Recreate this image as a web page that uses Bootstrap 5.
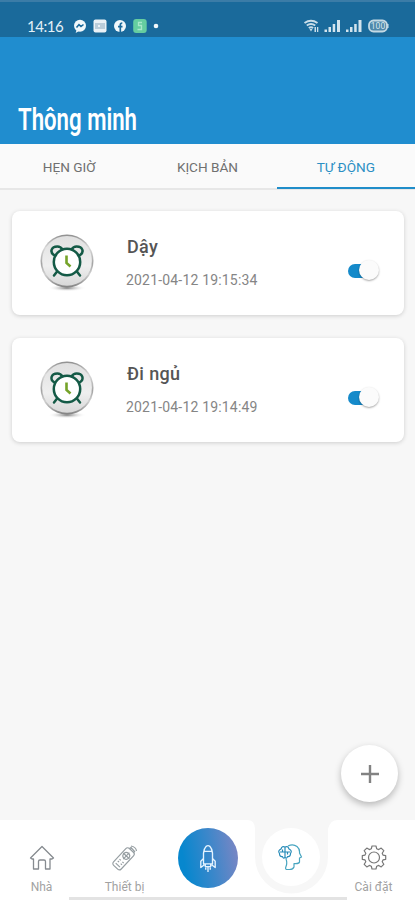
<!DOCTYPE html>
<html lang="vi">
<head>
<meta charset="utf-8">
<meta name="viewport" content="width=device-width, initial-scale=1">
<title>Thông minh</title>
<link rel="stylesheet" href="https://cdn.jsdelivr.net/npm/bootstrap@5.3.0/dist/css/bootstrap.min.css">
<style>
body{background:#f7f7f7;font-family:Roboto,"Noto Sans",sans-serif;color:#666}
svg{display:block;flex:none}
.screen{height:900px;width:415px}
.statusbar{height:37px;background:#1a6a9b;border-top:2px solid #3b7ca7;padding:12px 26px 0 27px;color:#e4f1f8}
.clock{font:15px/24px Lato,sans-serif;width:37px;letter-spacing:-.45px}
.appbar{height:107px;background:#208dcf;padding:58px 0 0 18px}
.tabs{height:46px;background:#fafafa;border-bottom:2px solid #e7e7e7}
.tabs .nav-link{padding:0;line-height:46px;height:45px;font-size:13.6px;color:#707070;border-bottom:0}
.tabs .nav-link.active{color:#2b8fc4;border-bottom:2px solid #208dc9}
.rule-card{height:104px;border:0;border-radius:8px;box-shadow:0 1px 4px rgba(0,0,0,.17);padding:0 25px 0 28px}
.rule-name{font-size:18px;line-height:22px;font-weight:500;color:#555;margin:-2px 0 13px 1px;letter-spacing:.35px}
.rule-time{font-size:14px;line-height:18px;color:#858585;letter-spacing:.18px}
.toggle{width:31px;height:22px}
.toggle-track{width:26px;height:14px;border-radius:7px;background:#158aca}
.toggle-thumb{right:0;top:0;width:20px;height:20px;border-radius:50%;background:#fbfbfb;box-shadow:0 1px 2px rgba(0,0,0,.35)}
.fab{width:57px;height:57px;margin-right:17px;margin-bottom:18px;background:#fff;box-shadow:0 3px 7px rgba(0,0,0,.26)}
.bottombar{height:80px}
.bottombar .tabitem{width:83px;height:80px;font-size:12px;line-height:15px;color:#a2a2a2;padding-top:24px}
.tabitem svg{margin-bottom:9px}
.tabitem .rocket svg,.tabitem .brain svg{margin:0}
.rocket{width:60px;height:60px;background:linear-gradient(80deg,#0787ce 15%,#3c87ca 55%,#8286c3)}
.brain{width:58px;height:58px;background:#fff}
.homebar{left:69px;bottom:0;width:278px;height:3px;background:#e3e3e3}
</style>
<script src="https://cdn.jsdelivr.net/npm/bootstrap@5.3.0/dist/js/bootstrap.bundle.min.js"></script>
</head>
<body>
<svg width="0" height="0" class="position-absolute">
 <defs>
  <linearGradient id="rim" x1="0" y1="0" x2="0" y2="1"><stop offset="0" stop-color="#8d8d8d"/><stop offset=".25" stop-color="#dadada"/><stop offset=".55" stop-color="#a4a4a4"/><stop offset=".75" stop-color="#d0d0d0"/><stop offset="1" stop-color="#808080"/></linearGradient>
  <linearGradient id="face" x1="0" y1="0" x2="0" y2="1"><stop offset="0" stop-color="#e0e0e0"/><stop offset=".6" stop-color="#efefef"/><stop offset="1" stop-color="#d8d8d8"/></linearGradient>
  <radialGradient id="shade"><stop offset="0" stop-color="#777"/><stop offset="1" stop-color="#fff" stop-opacity="0"/></radialGradient>
  <symbol id="alarm" viewBox="0 0 54 58">
   <ellipse cx="27" cy="54" rx="19" ry="3.5" fill="url(#shade)"/>
   <circle cx="27" cy="27" r="26.5" fill="url(#rim)"/>
   <circle cx="27" cy="26.8" r="24.900" fill="url(#face)"/>
   <g fill="none" stroke="#145a46" stroke-width="2.500" stroke-linecap="round">
    <path d="M14.500 21.500C9 18 11.500 12.500 17.500 12.600C20 12.600 21.500 14 22.500 15.600M39.500 21.500C45 18 42.500 12.500 36.500 12.600C34 12.600 32.500 14 31.500 15.600M22.500 15.600H31.500M17.500 37L14 41.500M36.500 37L40 41.500"/>
    <circle cx="27" cy="28" r="13.200" fill="#fff"/>
   </g>
   <path d="M26.500 21.500V29L30.500 32.500" fill="none" stroke="#75a329" stroke-width="2.600"/>
  </symbol>
 </defs>
</svg>
<div class="screen position-relative d-flex flex-column overflow-hidden">
 <header>
  <div class="statusbar d-flex align-items-start justify-content-between">
   <div class="d-flex align-items-center">
    <span class="clock">14:16</span>
    <svg width="97" height="24" viewBox="64 14 97 24">
     <circle cx="80" cy="25.700" r="6" fill="#f1f8fb"/><path d="M76.500 30L75.700 33L79 31Z" fill="#f1f8fb"/><path d="M76.500 27.500L79 24.600L81 26.500L83.500 24.500" fill="none" stroke="#1a6a9b" stroke-width="1.600"/>
     <rect x="93.500" y="19.500" width="13" height="13" rx="2" fill="#eaf1f6"/><path d="M95 24H105M95 26H98M100 26H105M95 28H105" stroke="#8ba9be"/>
     <circle cx="120" cy="26" r="6" fill="#f1f8fb"/><path d="M120.300 32V25Q120.300 23 122.300 23M118 26.700H122.500" fill="none" stroke="#1a6a9b" stroke-width="1.700"/>
     <rect x="133.200" y="19" width="13.500" height="14" rx="3" fill="#65cda0"/><path d="M142 22.500H138.500V25.500H141.500V29.500H137.500" fill="none" stroke="#a9e8cb" stroke-width="1.300"/>
     <circle cx="156" cy="26" r="2.300" fill="#f1f8fb"/>
    </svg>
   </div>
   <svg width="86" height="24" viewBox="304 14 86 24">
    <g fill="none" stroke="#c9dde8" stroke-width="1.900"><path d="M305.500 23Q312 18.500 318.500 23M307.800 25.600Q312 22.500 316.200 25.600M309.800 28Q312 26.500 314.200 28"/></g>
    <path d="M310.500 29L312 31.500L313.500 29ZM315.500 27H317V32H315.500ZM318 27H319.300V32H318Z" fill="#c9dde8"/>
    <path d="M325.500 29.500H328V32H325.500ZM329.500 27H332V32H329.500ZM333.700 24H336.200V32H333.700ZM338 20H341V32H338ZM347 29.500H349.500V32H347ZM351 27H353.500V32H351ZM355.200 24H357.700V32H355.200ZM359.500 20H362.500V32H359.500Z" fill="#d3e4ee"/>
    <rect x="370" y="20.500" width="18" height="11" rx="4.500" fill="#4e88aa" stroke="#c3d9e4" stroke-width="1.800"/><path d="M388.800 24V28" stroke="#c3d9e4" stroke-width="1.500"/>
    <text x="379" y="29.300" text-anchor="middle" font-family="Roboto,sans-serif" font-size="8.500" fill="#d7e6ee">100</text>
   </svg>
  </div>
  <div class="appbar">
   <h1 class="m-0"><svg width="130" height="48" viewBox="0 0 130 48" overflow="visible"><text x="0" y="35" textLength="119" lengthAdjust="spacingAndGlyphs" font-family="Roboto,sans-serif" font-size="31" font-weight="600" fill="#fff">Thông minh</text></svg></h1>
  </div>
  <nav class="tabs nav nav-justified flex-nowrap">
   <a class="nav-link" href="#">HẸN GIỜ</a>
   <a class="nav-link" href="#">KỊCH BẢN</a>
   <a class="nav-link active" href="#">TỰ ĐỘNG</a>
  </nav>
 </header>
 <main class="flex-grow-1 d-flex flex-column">
  <div class="d-flex flex-column" style="gap:23px;padding:21px 11px 0 12px">
   <section class="rule-card card flex-row align-items-center">
    <svg width="54" height="58"><use href="#alarm"/></svg>
    <div class="flex-grow-1 ps-4 ms-2"><h2 class="rule-name">Dậy</h2><div class="rule-time">2021-04-12 19:15:34</div></div>
    <div class="toggle position-relative d-flex align-items-center mt-3"><div class="toggle-track"></div><div class="toggle-thumb position-absolute"></div></div>
   </section>
   <section class="rule-card card flex-row align-items-center">
    <svg width="54" height="58"><use href="#alarm"/></svg>
    <div class="flex-grow-1 ps-4 ms-2"><h2 class="rule-name">Đi ngủ</h2><div class="rule-time">2021-04-12 19:14:49</div></div>
    <div class="toggle position-relative d-flex align-items-center mt-3"><div class="toggle-track"></div><div class="toggle-thumb position-absolute"></div></div>
   </section>
  </div>
  <button class="fab btn p-0 border-0 rounded-circle d-flex align-items-center justify-content-center mt-auto align-self-end" aria-label="Thêm"><svg width="18" height="18"><path d="M9 0V18M0 9H18" stroke="#828282" stroke-width="2.400"/></svg></button>
 </main>
 <footer class="bottombar position-relative">
  <svg class="position-absolute top-0 start-0" width="415" height="80"><path d="M0 0H247Q255 0 255 9V37A36.500 36.500 0 0 0 328 37V9Q330 0 338 0H415V80H0Z" fill="#fff"/></svg>
  <div class="position-relative d-flex">
   <div class="tabitem d-flex flex-column align-items-center">
    <svg width="26" height="27" viewBox="0 0 26 27" fill="none" stroke="#868b90" stroke-width="1.300" stroke-linejoin="round"><path d="M1.500 14L13 2.500L24.500 14L23 15H21V25H16.500V17.500Q16.500 16 15 16H11Q9.500 16 9.500 17.500V25H4.500V15H3Z"/></svg>Nhà
   </div>
   <div class="tabitem d-flex flex-column align-items-center">
    <svg width="28" height="27" viewBox="0 0 28 27" fill="none" stroke="#969ea2" stroke-width="1.200"><g transform="rotate(43 12 15)"><rect x="7" y="3" width="10.500" height="23" rx="2.500"/><circle cx="12.300" cy="10.500" r="3.300"/><path d="M12.300 6V15M8 10.500H16.500M9.500 17.500H11.300M13.500 17.500H15.300M9.500 20H11.300M13.500 20H15.300M9.500 23H15.300"/></g><path d="M18.500 4Q22.500 4.500 23.500 8.500M20 2Q25 3 25.500 7M19.500 3L24 8"/></svg>Thiết bị
   </div>
   <div class="tabitem d-flex justify-content-center pt-2">
    <div class="rocket rounded-circle d-flex align-items-center justify-content-center">
     <svg width="18" height="29" viewBox="0 0 20 32" fill="none" stroke="#e5f4ff" stroke-width="1.500" stroke-linejoin="round"><path d="M5 22V10Q5.500 5 8 2.500Q10 1 12 2.500Q14.500 5 15 10V22ZM6 8H14M5 16L2 19V26L6 23M15 16L18 19V26L14 23M7 22V25H13V22M10 25V31M7.500 26V28.500M12.500 26V28.500"/></svg>
    </div>
   </div>
   <div class="tabitem d-flex justify-content-center pt-2">
    <div class="brain rounded-circle d-flex align-items-center justify-content-center">
     <svg width="25" height="27" viewBox="0 0 25 27" fill="none" stroke="#48a5c0" stroke-width="1.200" stroke-linejoin="round"><path d="M10 2Q15 -.5 19 2.500Q22 5 21.500 9L23.500 13L21.500 14V18Q21 20 16 19.500V23Q15 25.500 11.500 25.500H8.500Q7 25 8 22.500Q9.500 19 8 15"/><path d="M7 2.500V14M7 3Q4 1.500 3 5Q-.5 6.500 1.500 9.500Q1.500 13 4.500 12.500Q5 15 7 13.500M7 3Q10 1.500 11 5Q14.500 6.500 12.500 9.500Q12.500 13 9.500 12.500Q9 15 7 13.500M2 8H12M4.500 5.500V8M9.500 8V10.500" stroke="#278bb8"/></svg>
    </div>
   </div>
   <div class="tabitem d-flex flex-column align-items-center">
    <svg width="26" height="27" viewBox="-13 -13.500 26 27" fill="none" stroke="#777" stroke-width="1.200" stroke-linejoin="round"><path d="M-2 -11.500H2L2.700 -8.700L4.700 -7.900L7.200 -9.400L9.800 -6.800L8.200 -4.300L9 -2.400L11.700 -1.800V1.800L9 2.400L8.200 4.300L9.800 6.800L7.200 9.400L4.700 7.900L2.700 8.700L2 11.500H-2L-2.700 8.700L-4.700 7.900L-7.200 9.400L-9.800 6.800L-8.200 4.300L-9 2.400L-11.700 1.800V-1.800L-9 -2.400L-8.200 -4.300L-9.800 -6.800L-7.200 -9.400L-4.700 -7.900L-2.700 -8.700Z"/><circle r="5.500"/></svg>Cài đặt
   </div>
  </div>
  <div class="homebar position-absolute"></div>
 </footer>
</div>
</body>
</html>
